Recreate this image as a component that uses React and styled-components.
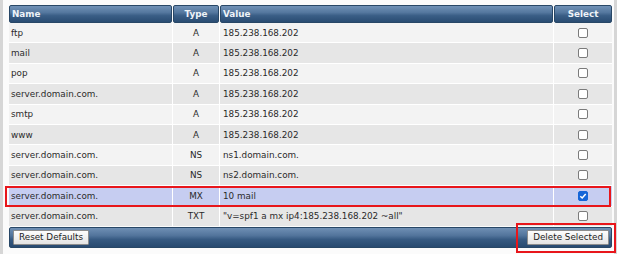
import React from 'react';
import styled, { createGlobalStyle } from 'styled-components';

const GlobalStyle = createGlobalStyle`
  html, body {
    margin: 0;
    padding: 0;
    background: #fff;
  }
  body {
    font-family: "DejaVu Sans", Verdana, sans-serif;
  }
`;

const COLS = '163px 46px 333px 58px';

const Page = styled.div`
  width: 624px;
  height: 254px;
  overflow: hidden;
  background: #fff;
`;

const Panel = styled.div`
  width: 617px;
  height: 100%;
  box-sizing: border-box;
  border-left: 3px solid #d6d6d6;
  border-right: 3px solid #d6d6d6;
  background: #fbfbfb;
  padding: 5px 2px 0 6px;
`;

const Grid = styled.div`
  display: grid;
  grid-template-columns: ${COLS};
  column-gap: 1px;
`;

const HeaderRow = styled(Grid)`
  height: 18px;
`;

const HeaderCell = styled.div`
  display: flex;
  align-items: center;
  justify-content: ${p => (p.$center ? 'center' : 'flex-start')};
  padding-left: ${p => (p.$center ? '0' : '2px')};
  box-sizing: border-box;
  border: 1px solid #284766;
  border-radius: 2px;
  background: linear-gradient(to bottom, #7091b6 0%, #55789f 40%, #3a5e86 60%, #2a4c72 100%);
  color: #eef3f8;
  font-size: 8.8px;
  font-weight: bold;
`;

const Body = styled.div`
  background: #fff;
`;

const Row = styled(Grid)`
  position: relative;
  height: 19.4px;
  margin-bottom: 1px;
`;

const Cell = styled.div`
  display: flex;
  align-items: center;
  justify-content: ${p => (p.$center ? 'center' : 'flex-start')};
  padding-left: ${p => (p.$center ? '0' : '2px')};
  background: ${p => (p.$selected ? '#c6cdf1' : p.$odd ? '#e6e6e6' : '#f3f3f3')};
  color: #2a2a2a;
  font-size: 8.8px;
  white-space: nowrap;
  overflow: hidden;
`;

const ValueCell = styled(Cell)`
  padding-left: 3px;
`;

const Marker = styled.div`
  position: absolute;
  top: ${p => p.$top};
  bottom: ${p => p.$bottom};
  left: ${p => p.$left};
  right: ${p => p.$right};
  border: 2px solid #e8161b;
  pointer-events: none;
`;

const Check = styled.span`
  display: inline-flex;
  align-items: center;
  justify-content: center;
  width: 10px;
  height: 10px;
  box-sizing: border-box;
  border: 1px solid ${p => (p.$on ? '#1565d8' : '#7b7b7b')};
  border-radius: 2px;
  background: ${p => (p.$on ? '#1565d8' : '#fff')};
`;

const Footer = styled.div`
  position: relative;
  height: 21px;
  box-sizing: border-box;
  display: flex;
  align-items: center;
  justify-content: space-between;
  padding: 0 2px 0 3px;
  border: 1px solid #284766;
  border-radius: 2px;
  background: linear-gradient(to bottom, #6f8fb4 0%, #52749b 40%, #375a82 60%, #284a70 100%);
`;

const Button = styled.button`
  height: 15px;
  padding: 0 5px;
  box-sizing: border-box;
  border: 1px solid #8d8d8d;
  border-radius: 1px;
  background: linear-gradient(to bottom, #fdfdfd, #e4e4e4);
  color: #1e1e1e;
  font-family: "DejaVu Sans", Verdana, sans-serif;
  font-size: 8.8px;
  line-height: 13px;
  cursor: pointer;
`;

const records = [
  { name: 'ftp', type: 'A', value: '185.238.168.202' },
  { name: 'mail', type: 'A', value: '185.238.168.202' },
  { name: 'pop', type: 'A', value: '185.238.168.202' },
  { name: 'server.domain.com.', type: 'A', value: '185.238.168.202' },
  { name: 'smtp', type: 'A', value: '185.238.168.202' },
  { name: 'www', type: 'A', value: '185.238.168.202' },
  { name: 'server.domain.com.', type: 'NS', value: 'ns1.domain.com.' },
  { name: 'server.domain.com.', type: 'NS', value: 'ns2.domain.com.' },
  { name: 'server.domain.com.', type: 'MX', value: '10 mail', selected: true },
  { name: 'server.domain.com.', type: 'TXT', value: '"v=spf1 a mx ip4:185.238.168.202 ~all"' },
];

const CheckBox = ({ on }) => (
  <Check $on={on}>
    {on && (
      <svg width="8" height="8" viewBox="0 0 8 8">
        <path d="M1.3 4.2 L3.2 6 L6.7 2" fill="none" stroke="#fff" strokeWidth="1.5" />
      </svg>
    )}
  </Check>
);

const App = () => (
  <Page>
    <GlobalStyle />
    <Panel>
      <HeaderRow>
        <HeaderCell>Name</HeaderCell>
        <HeaderCell $center>Type</HeaderCell>
        <HeaderCell>Value</HeaderCell>
        <HeaderCell $center>Select</HeaderCell>
      </HeaderRow>
      <Body>
        {records.map((r, i) => (
          <Row key={i}>
            <Cell $odd={i % 2 === 1} $selected={r.selected}>{r.name}</Cell>
            <Cell $center $odd={i % 2 === 1} $selected={r.selected}>{r.type}</Cell>
            <ValueCell $odd={i % 2 === 1} $selected={r.selected}>{r.value}</ValueCell>
            <Cell $center $odd={i % 2 === 1} $selected={r.selected}>
              <CheckBox on={!!r.selected} />
            </Cell>
            {r.selected && <Marker $top="0" $bottom="-1px" $left="-4px" $right="1px" />}
          </Row>
        ))}
      </Body>
      <Footer>
        <Button type="button">Reset Defaults</Button>
        <Button type="button">Delete Selected</Button>
        <Marker $top="-5px" $bottom="-6px" $left="506px" $right="-5px" />
      </Footer>
    </Panel>
  </Page>
);

export default App;
